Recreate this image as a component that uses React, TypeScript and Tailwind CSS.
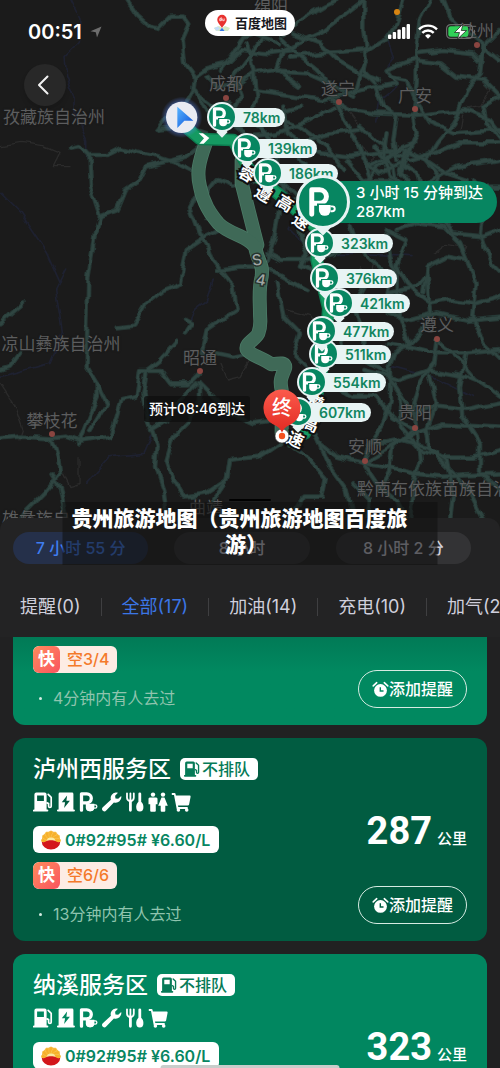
import type { ReactNode } from "react";

/* ---------- Map data ---------- */

// Road polylines, in map units (three units to a pixel).
const ROADS: string[] = [
  "380,0 410,45 450,80 475,85 510,50 550,50 568,75 548,120 555,190 585,230 580,270 560,310 530,330 500,350 470,390",
  "210,440 235,435 265,465 320,465 360,445 420,460 470,470 530,490 570,510",
  "265,465 270,560 300,650 285,700 265,830 262,960 260,1100 290,1150 290,1190 270,1240 250,1290 235,1330",
  "300,650 350,630 375,570 420,540 440,500 500,485 560,470 600,440",
  "470,390 560,380 620,400",
  "0,1315 60,1310 155,1315 200,1310 240,1325 330,1310 350,1250 365,1200 410,1190 420,1110 480,1110 510,1150 570,1150 600,1120",
  "155,1315 175,1380 180,1420 130,1480 80,1530 60,1560",
  "155,1420 180,1460 200,1560",
  "290,1150 320,1210 270,1290",
  "350,985 400,980 440,910 490,870 540,850 560,750 620,710 660,690",
  "555,960 575,970 555,1000",
  "530,1025 480,1080 440,1110 430,1180 445,1260 470,1330 465,1400 490,1470 500,1540",
  "600,1150 600,1200 560,1270 520,1310 500,1380 520,1440 550,1490 620,1480 680,1440 690,1380 780,1370 840,1330",
  "600,1150 650,1200 690,1240 760,1270 830,1260",
  "590,1150 540,1200 500,1260 450,1290",
  "600,560 570,620 600,700 625,740 640,780 700,860 710,930 620,990 605,1060",
  "650,1060 700,1070 750,1060",
  "585,230 620,205 680,190 720,150 800,160 880,150",
  "660,210 700,160 730,110 760,100 840,130",
  "620,230 650,260 720,250 760,220 830,210 900,260",
  "600,290 640,320 690,310 720,340 760,360 900,320",
  "580,260 620,340 650,380 700,380 740,410",
  "790,110 700,230 720,290 700,330",
  "740,130 760,210 770,300 740,370",
  "850,100 920,50 970,20 1010,0",
  "830,210 850,150 960,100 1090,0",
  "840,110 900,170 950,210 980,240",
  "830,215 920,220 1000,255 1060,290",
  "880,100 960,130 1010,180 1080,220 1140,240",
  "760,270 900,290 970,300 1080,270 1190,250",
  "870,170 960,160 1100,150 1160,115 1190,70 1210,0",
  "1090,0 1090,90 1100,170 1090,210 1130,250",
  "1060,280 1080,210 1100,180",
  "1190,250 1160,210 1240,180 1320,190 1370,230 1450,240 1500,290",
  "1250,250 1250,130 1260,60 1290,0",
  "1250,160 1330,150 1420,160 1440,180 1460,130 1500,90",
  "1330,0 1350,50 1400,100 1500,180",
  "1450,140 1440,220 1400,270 1360,370 1310,430 1280,480",
  "1000,300 1050,330 1120,340 1250,345 1400,330 1470,360 1500,400",
  "1010,310 1050,390 1080,440 1100,500 1120,560",
  "850,320 860,400 900,430 960,460 1050,470 1180,450",
  "740,410 830,400 930,360 1000,320",
  "820,350 900,380 980,440 1030,510",
  "760,360 840,450 830,520 860,590",
  "730,450 800,440 900,430 990,400 1080,390",
  "1130,260 1150,320 1190,350 1180,420 1190,480",
  "1250,250 1240,350 1250,400 1220,470 1200,520",
  "1170,230 1220,240 1250,310 1290,370 1360,400 1500,390",
  "1500,290 1450,320 1460,370 1500,420",
  "1080,380 1140,430 1180,460 1230,480 1300,460 1380,430 1500,430",
  "1100,500 1160,470 1210,450 1280,480 1340,520 1400,540",
  "1090,480 1140,520 1200,490 1250,520 1270,590 1250,650",
  "1160,400 1150,470 1170,530 1230,560 1290,540 1370,500 1500,480",
  "1120,440 1180,500 1190,560 1150,620",
  "1220,450 1200,510 1230,550 1210,620",
  "1040,480 1090,540 1170,540 1240,580 1320,590 1400,560 1500,560",
  "1090,560 1130,500 1190,450 1240,430",
  "1280,480 1320,530 1300,600 1340,660",
  "620,660 600,600 650,540 700,560 800,530 860,560 900,600",
  "900,480 970,530 1040,600",
  "860,530 840,620 820,720 800,780",
  "880,600 900,700 920,760 900,800 950,820",
  "800,760 840,780 920,780 1000,760 1060,720",
  "650,810 720,800 790,800 850,830 920,870",
  "830,850 850,950 900,1000 880,1060 920,1100",
  "1050,680 1070,740 1120,790 1170,830 1160,880 1250,860 1280,820",
  "1160,700 1170,770 1190,820 1190,880 1200,950 1230,1030",
  "1190,690 1250,670 1330,680 1380,730 1400,780 1340,770 1280,800 1270,880",
  "1160,690 1220,720 1190,800 1220,850 1250,880 1290,910",
  "1330,660 1360,700 1450,710 1500,690",
  "1280,820 1290,940 1260,1000 1230,1030 1180,1060 1160,1120",
  "1290,910 1350,900 1430,910 1500,890",
  "1400,780 1430,850 1420,950 1450,1030 1500,1080",
  "1160,940 1230,960 1310,940 1400,960 1500,950",
  "1160,1030 1230,1040 1310,1060 1400,1060 1500,1050",
  "1310,1020 1300,1090 1260,1150 1240,1220 1250,1290 1260,1380 1240,1450 1230,1560",
  "1310,1020 1380,1080 1430,1140 1500,1190",
  "1010,960 1030,1040 1090,1080 1160,1120 1200,1180 1240,1240",
  "1090,1110 1200,1140 1290,1110 1400,1130 1450,1150",
  "1000,1150 1060,1190 1130,1190 1180,1250 1240,1290",
  "1170,1110 1170,1200 1150,1270 1110,1330 1090,1380",
  "920,1200 940,1290 960,1330 1010,1370 1090,1390 1160,1350 1240,1300 1330,1270 1500,1280",
  "960,1330 990,1400 1040,1470 1060,1560",
  "860,1330 920,1370 980,1440 970,1490 910,1490 870,1560",
  "1090,1390 1130,1450 1190,1500 1220,1560",
  "1090,1390 1150,1400 1240,1420 1330,1430 1500,1420",
  "1110,1330 1160,1330 1210,1320 1280,1340 1340,1380 1360,1480 1350,1560",
  "1240,1240 1310,1220 1400,1230 1500,1210",
  "1200,1190 1200,1280 1260,1350 1330,1370 1420,1370 1500,1350",
  "1290,1130 1310,1210 1280,1290 1290,1350 1400,1460 1450,1560",
  "1240,1290 1180,1340 1170,1420 1140,1470",
  "1400,1060 1380,1160 1390,1250 1440,1330 1440,1420 1500,1470",
  "690,1380 680,1440 640,1500 640,1560",
  "1090,1080 1090,1000 1060,930 1100,860",
  "0,1110 30,1100 60,1060",
  "0,970 70,910",
  "1100,1560 1110,1500 1060,1450",
  "1420,540 1450,620 1440,700 1470,790 1500,820",
];

const RIVERS: string[] = [
  "210,0 240,60 235,130 195,170 200,230 225,290 225,340 260,420 260,480",
  "1160,100 1180,180 1160,210 1190,260 1140,300 1130,360",
  "640,840 620,900 580,930 560,1000",
  "200,810 170,870 190,1000 150,1090 0,1130",
  "920,600 870,690 940,760 1080,760 1230,770",
  "0,580 60,640 140,760 180,850",
  "260,1450 330,1370 430,1360 460,1290",
  "1110,1130 1190,1100 1300,1130 1420,1190",
];

const BORDERS: string[] = [
  "0,440 60,430 130,440 180,460 160,500 210,500",
  "0,1150 40,1210 70,1290 60,1320",
  "1050,340 1080,380 1060,420 1120,470 1110,530",
  "1440,240 1470,270 1440,320 1390,330 1380,390",
  "1090,760 1120,780 1110,830 1080,800 1060,850",
  "1300,760 1340,730 1400,740 1390,760",
  "660,1090 680,1140 720,1130 750,1080 810,1110",
  "190,1420 210,1460 240,1450 240,1370",
  "860,930 930,950 960,1010",
];

const PLACES = [
  { name: "绵阳", x: 271, y: 7 },
  { name: "成都", x: 226, y: 84, dot: [226, 98] },
  { name: "遂宁", x: 338, y: 89, dot: [339, 102] },
  { name: "广安", x: 415, y: 96, dot: [415, 109] },
  { name: "达州", x: 477, y: 31, dot: [477, 45] },
  { name: "孜藏族自治州", x: 54, y: 117 },
  { name: "凉山彝族自治州", x: 61, y: 344 },
  { name: "昭通", x: 200, y: 358, dot: [200, 371] },
  { name: "攀枝花", x: 52, y: 421, dot: [52, 434] },
  { name: "遵义", x: 437, y: 325, dot: [437, 339] },
  { name: "贵阳", x: 415, y: 413, dot: [415, 428] },
  { name: "安顺", x: 365, y: 447, dot: [365, 461] },
  { name: "黔南布依族苗族自治州", x: 442, y: 489 },
  { name: "曲靖", x: 206, y: 508 },
  { name: "雄彝族自", x: 36, y: 519 },
];

const STOPS = [
  { km: 607, x: 298, y: 412 },
  { km: 554, x: 312, y: 382 },
  { km: 511, x: 324, y: 354 },
  { km: 477, x: 322, y: 331 },
  { km: 421, x: 339, y: 303 },
  { km: 376, x: 325, y: 278 },
  { km: 323, x: 320, y: 243 },
  { km: 186, x: 268, y: 173 },
  { km: 139, x: 247, y: 148 },
  { km: 78, x: 222, y: 117 },
];

const ROAD_NAME = [
  { c: "蓉", x: 741, y: 522, r: 30 },
  { c: "遵", x: 790, y: 582, r: 30 },
  { c: "高", x: 855, y: 610, r: 32 },
  { c: "速", x: 903, y: 665, r: 32 },
  { c: "遵", x: 945, y: 1208, r: 24 },
  { c: "高", x: 932, y: 1272, r: 24 },
  { c: "速", x: 886, y: 1320, r: 24 },
];

/* ---------- Icons ---------- */

function ParkingCup({ className, cut }: { className: string; cut: string }) {
  return (
    <svg viewBox="0 0 20 20" className={className} fill="none" aria-hidden="true">
      <path d="M2.500 18.200V1.800h5.300a4.500 4.500 0 0 1 0 9H3" stroke="currentColor" strokeWidth="3.300" strokeLinecap="round" strokeLinejoin="round" />
      <path d="M6.800 11.800h8.500v3.400a4 4 0 0 1-4 4h-.5a4 4 0 0 1-4-4z" fill="currentColor" stroke={cut} strokeWidth="1.600" />
      <path d="M7.300 12h7.800v3.400a3.800 3.800 0 0 1-3.800 3.800h-.2a3.800 3.800 0 0 1-3.800-3.800z" fill="currentColor" />
      <path d="M15 12.900h1.200a1.600 1.600 0 0 1 0 3.300H15" stroke="currentColor" strokeWidth="1.300" />
    </svg>
  );
}

function GasPump({ className }: { className: string }) {
  return (
    <svg viewBox="0 0 20 20" className={className} aria-hidden="true">
      <path fill="currentColor" fillRule="evenodd" d="M3.400.500h8.200a2 2 0 0 1 2 2v15h.700a1 1 0 0 1 0 2.100H.9a1 1 0 0 1 0-2.100h.5v-15a2 2 0 0 1 2-2zm.700 3v5.600h6.800V3.500z" />
      <path fill="none" stroke="currentColor" strokeWidth="1.700" strokeLinecap="round" strokeLinejoin="round" d="M15.200 2.400l3 2.900v8.900a1.300 1.300 0 0 1-2.600 0v-2.600l-1.600-.7" />
    </svg>
  );
}

function Charger({ className }: { className: string }) {
  return (
    <svg viewBox="0 0 20 20" className={className} aria-hidden="true">
      <path fill="currentColor" fillRule="evenodd" d="M4 .5h12a1.400 1.400 0 0 1 1.400 1.400v15.600h.5a1 1 0 0 1 0 2.100H2a1 1 0 0 1 0-2.100h.6V1.900A1.400 1.400 0 0 1 4 .5zm7.100 3L5.800 10.300h3.300l-1 5.700 5.800-7.200h-3.500z" />
    </svg>
  );
}

function Wrench({ className }: { className: string }) {
  return (
    <svg viewBox="0 0 20 20" className={className} aria-hidden="true">
      <path fill="currentColor" d="M13.700.6a5.800 5.800 0 0 1 2.300.2l-2.900 3 .4 2.600 2.700.4 3-2.900a5.600 5.600 0 0 1-7.300 6.500l-7.700 8.200a2.300 2.300 0 0 1-3.400-3.300l8.100-7.500A5.600 5.600 0 0 1 13.700.6z" />
    </svg>
  );
}

function Cutlery({ className }: { className: string }) {
  return (
    <svg viewBox="0 0 20 20" className={className} aria-hidden="true">
      <path fill="none" stroke="currentColor" strokeWidth="1.800" strokeLinecap="round" d="M2 1.300v4.400a3.400 3.400 0 0 0 6.800 0V1.300M5.400 1.300v7" />
      <path fill="none" stroke="currentColor" strokeWidth="2.800" strokeLinecap="round" d="M5.400 9v9.300M14.800 1.800v12" />
      <path fill="currentColor" d="M14.800 9.500c2 0 3.600 2.900 3.600 5.400a3.600 4.500 0 0 1-7.200 0c0-2.500 1.600-5.400 3.600-5.400z" />
    </svg>
  );
}

function Restroom({ className }: { className: string }) {
  return (
    <svg viewBox="0 0 20 20" className={className} fill="currentColor" aria-hidden="true">
      <circle cx="5" cy="2.600" r="2.200" />
      <path d="M1.800 5.400h6.400a1.400 1.400 0 0 1 1.300 1.400v5.400H7.800v6.600a1 1 0 0 1-1 1H3.200a1 1 0 0 1-1-1v-6.600H.5V6.800a1.400 1.400 0 0 1 1.300-1.400z" />
      <circle cx="15" cy="2.600" r="2.200" />
      <path d="M13.500 5.400h3l3.300 8.400h-2.500v5a1 1 0 0 1-1 1h-2.600a1 1 0 0 1-1-1v-5h-2.500z" />
    </svg>
  );
}

function Cart({ className }: { className: string }) {
  return (
    <svg viewBox="0 0 20 20" className={className} fill="currentColor" aria-hidden="true">
      <path d="M.8.9h2.700a1 1 0 0 1 1 .8l.4 1.900h13.700a1 1 0 0 1 1 1.200l-1.500 7.700a1.400 1.400 0 0 1-1.300 1.100H7l.3 1.500h9.400v1.800H5.700L3 2.900H.8z" />
      <circle cx="7.400" cy="18" r="1.800" />
      <circle cx="15.700" cy="18" r="1.800" />
    </svg>
  );
}

function AlarmClock({ hand }: { hand: string }) {
  return (
    <svg viewBox="0 0 18 18" className="size-[17px]" aria-hidden="true">
      <circle cx="9" cy="10" r="6.800" fill="#fff" />
      <path d="M1.300 5.200 5 1.800M16.700 5.200 13 1.800" stroke="#fff" strokeWidth="1.700" strokeLinecap="round" />
      <path d="M8.800 6.600v4h3.400" stroke={hand} strokeWidth="1.500" fill="none" />
    </svg>
  );
}

function FlowerLogo() {
  const petals = [-90, -60, -30, 0, 30, 60, 90];
  return (
    <svg viewBox="0 0 20 20" className="size-5" aria-hidden="true">
      <path d="M.8 10.500a9.200 9.200 0 0 1 18.400 0z" fill="#f39a16" />
      {petals.map((a) => (
        <ellipse key={a} cx="10" cy="4.700" rx="2.200" ry="4" fill="#f7b02a" stroke="#fbd46e" strokeWidth=".4" transform={`rotate(${a} 10 10.500)`} />
      ))}
      <path d="M5.500 11a4.600 4.400 0 0 1 9 0z" fill="#fbe9a0" />
      <path d="M.8 12c1.800.4 3.200 0 4.400-.8 2-1.400 7.600-1.400 9.600 0 1.200.8 2.600 1.200 4.400.8a9.200 7.600 0 0 1-18.400 0z" fill="#d3161b" />
    </svg>
  );
}

const FACILITY_ICONS: Record<string, ReactNode> = {
  加油: <GasPump className="size-5" />,
  充电: <Charger className="size-5" />,
  停车: <ParkingCup className="size-5" cut="none" />,
  维修: <Wrench className="size-5" />,
  餐饮: <Cutlery className="size-5" />,
  卫生间: <Restroom className="size-5" />,
  购物: <Cart className="size-5" />,
};

/* ---------- Map ---------- */

const SLOW_ROUTE =
  "M617 430C595 490 590 520 600 560C610 610 630 640 655 670C690 705 740 705 765 740C775 790 790 790 785 830C775 870 780 900 780 940C780 960 785 975 775 1000C765 1020 735 1030 740 1048C750 1065 780 1070 815 1093C835 1090 860 1085 855 1105C845 1130 838 1140 845 1170V1300";
const FAST_ROUTE = "M545 370L600 417L700 420L745 505L850 595L955 690L950 780L985 925L975 1060L950 1190L915 1300L870 1320";

function MapDrawing() {
  return (
    <svg viewBox="0 0 1500 1620" className="absolute inset-0 size-full" fill="none" aria-hidden="true">
      <defs>
        <filter id="wiggle" x="0" y="0" width="100%" height="100%" colorInterpolationFilters="sRGB">
          <feTurbulence type="fractalNoise" baseFrequency="0.02" numOctaves="2" seed="4" />
          <feDisplacementMap in="SourceGraphic" scale="24" xChannelSelector="R" yChannelSelector="G" />
        </filter>
        <linearGradient id="arrow" x1="0" y1="0" x2="1" y2="1">
          <stop offset="0" stopColor="#57b5ff" />
          <stop offset="1" stopColor="#0a4fd8" />
        </linearGradient>
        <radialGradient id="glow">
          <stop offset="0.7" stopColor="#5a8cff" stopOpacity=".45" />
          <stop offset="1" stopColor="#5a8cff" stopOpacity="0" />
        </radialGradient>
        <linearGradient id="pin" x1="0" y1="0" x2="0" y2="1">
          <stop offset="0" stopColor="#fb5a4c" />
          <stop offset="1" stopColor="#e22a22" />
        </linearGradient>
      </defs>
      <g filter="url(#wiggle)" strokeLinejoin="round" strokeLinecap="round">
        {BORDERS.map((p) => (
          <polyline key={p} points={p} stroke="#2b2b2b" strokeWidth="4" />
        ))}
        {RIVERS.map((p) => (
          <polyline key={p} points={p} stroke="#1e2130" strokeWidth="5" />
        ))}
        {ROADS.map((p) => (
          <polyline key={p} points={p} stroke="#263835" strokeWidth="14" />
        ))}
        {ROADS.map((p) => (
          <polyline key={p} points={p} stroke="#2f4541" strokeWidth="8" />
        ))}
      </g>
      <g strokeLinejoin="round" strokeLinecap="round">
        <g stroke="#4b7a66" strokeWidth="42">
          <path d="M725 480V550L772 735" />
          <path d={SLOW_ROUTE} />
        </g>
        <g stroke="#3f6957" strokeWidth="37">
          <path d="M725 480V550L772 735" />
          <path d={SLOW_ROUTE} />
        </g>
        <path d={FAST_ROUTE} stroke="#0d7c50" strokeWidth="38" />
        <path d={FAST_ROUTE} stroke="#159a62" strokeWidth="29" />
      </g>
      <path d="M596 400L609 400L628 414L611 431L598 431L612 415Z" fill="#fff" />
      <circle cx="545" cy="352" r="62" fill="url(#glow)" />
      <circle cx="545" cy="352" r="47" fill="#e9ebf2" />
      <path d="M532 320L580 362L553 362L532 384Z" fill="url(#arrow)" />
      <g fill="#fff" stroke="#111" strokeWidth="12" paintOrder="stroke" fontSize="50" fontWeight="600" textAnchor="middle">
        {ROAD_NAME.map((n) => (
          <text key={`${n.c}${n.x}`} x={n.x} y={n.y} dy="18" transform={`rotate(${n.r} ${n.x} ${n.y})`}>
            {n.c}
          </text>
        ))}
      </g>
      <g fill="#a0a6a3" stroke="#26332e" strokeWidth="8" paintOrder="stroke" fontSize="46" fontWeight="500" textAnchor="middle">
        <text x="771" y="796" transform="rotate(-10 771 780)">S</text>
        <text x="783" y="856" transform="rotate(10 783 840)">4</text>
      </g>
    </svg>
  );
}

function StopPin({ km, x, y }: { km: number; x: number; y: number }) {
  return (
    <div className="absolute flex items-center" style={{ left: x - 15, top: y - 15 }}>
      <span className="absolute top-[26px] left-[11px] size-2 rotate-45 bg-[#e8f4f4]" />
      <span className="absolute -right-[5px] left-4 h-[19px] rounded-full bg-[#e8f4f4]" />
      <span className="relative flex size-[30px] items-center justify-center rounded-full border-2 border-[#e8f4f4] bg-[#078661] text-white">
        <ParkingCup className="size-5" cut="#078661" />
      </span>
      <span className="relative pl-[6px] text-sm leading-[19px] font-semibold text-[#12855f]">{km}km</span>
    </div>
  );
}

function RouteMap() {
  return (
    <section aria-label="路线地图" className="relative h-[540px] shrink-0 overflow-hidden bg-[#1b1b1b]">
      <div className="absolute inset-y-0 left-1/2 w-[500px] -translate-x-1/2">
        <MapDrawing />
        {PLACES.map((p) => (
          <span key={p.name}>
            <span
              className="absolute -translate-x-1/2 -translate-y-1/2 text-[17px] leading-5 whitespace-nowrap text-[#5c5d5e] [text-shadow:0_0_2px_#1b1b1b]"
              style={{ left: p.x, top: p.y }}
            >
              {p.name}
            </span>
            {p.dot && (
              <span
                className="absolute size-[6px] -translate-x-1/2 -translate-y-1/2 rounded-full bg-[#8a4540]"
                style={{ left: p.dot[0], top: p.dot[1] }}
              />
            )}
          </span>
        ))}
        {STOPS.map((s) => (
          <StopPin key={s.km} {...s} />
        ))}

        <div className="absolute top-[181px] left-[323px] flex h-[42px] flex-col justify-center rounded-r-full bg-[#078661] pr-[14px] pl-[33px] text-[15px] leading-[19px] font-medium text-white">
          <span>3 小时 15 分钟到达</span>
          <span>287km</span>
        </div>
        <span className="absolute top-[221px] left-[317px] size-3 rotate-45 bg-[#e8f4f4]" />
        <span className="absolute top-[175px] left-[296px] flex size-[54px] items-center justify-center rounded-full border-[3px] border-[#e8f4f4] bg-[#078661] text-white">
          <ParkingCup className="size-[30px]" cut="#078661" />
        </span>

        <span className="absolute top-[396px] left-[144px] rounded-[3px] bg-[#0f0f0f]/80 px-[5px] text-sm leading-[26px] font-medium whitespace-nowrap text-white">
          预计08:46到达
        </span>
        <svg viewBox="0 0 40 56" className="absolute top-[388px] left-[262px] h-14 w-10" aria-hidden="true">
          <circle cx="20" cy="48" r="7" fill="#fff" stroke="#333" strokeWidth=".6" />
          <circle cx="20" cy="48" r="3.200" fill="#f4511e" />
          <path d="M20 1.500a18.600 18.600 0 0 1 6.500 36C23.500 39 21.500 41 20 44.500 18.500 41 16.500 39 13.500 37.500A18.600 18.600 0 0 1 20 1.500z" fill="url(#pin)" />
        </svg>
        <span className="absolute top-[396px] left-[272px] text-xl leading-6 font-medium text-white">终</span>
        <span className="absolute top-[499px] left-[229px] h-[2px] w-[42px] rounded-full bg-black" />
      </div>
    </section>
  );
}

/* ---------- Status bar and header ---------- */

function StatusBar() {
  return (
    <header className="absolute inset-x-0 top-0 flex items-start justify-between pr-6 pl-7 text-white">
      <div className="mt-5 flex items-center gap-2">
        <time className="text-xl leading-6 font-semibold">00:51</time>
        <svg viewBox="0 0 12 12" className="size-3" aria-hidden="true">
          <path d="M11.500.500 7 11.500 5.800 6.300.500 5.200z" fill="#6d6d6d" />
        </svg>
      </div>
      <div className="mt-6 flex items-start gap-2">
        <svg viewBox="0 0 22 15" className="h-[15px] w-[22px]" fill="#fff" aria-hidden="true">
          <rect x="0" y="10.500" width="3.400" height="4.500" rx="1" />
          <rect x="4.700" y="8" width="3.400" height="7" rx="1" />
          <rect x="9.400" y="5.500" width="3.400" height="9.500" rx="1" />
          <rect x="14" y="3" width="3.400" height="12" rx="1" />
          <rect x="18.600" y="0" width="3.400" height="15" rx="1" />
        </svg>
        <svg viewBox="0 0 20 15" className="h-[15px] w-5" fill="none" stroke="#fff" strokeWidth="2.400" aria-hidden="true">
          <path d="M1 5.300a12.800 12.800 0 0 1 18 0" />
          <path d="M4.300 8.900a8 8 0 0 1 11.400 0" />
          <path d="M10 14.800 7.100 11.700a4.200 4.200 0 0 1 5.800 0z" fill="#fff" stroke="none" />
        </svg>
        <svg viewBox="0 0 30 15" className="h-[15px] w-[30px]" aria-hidden="true">
          <rect x=".6" y=".6" width="26" height="13.800" rx="4" fill="none" stroke="#6b6b6b" strokeWidth="1.200" />
          <rect x="2.300" y="2.300" width="20" height="10.400" rx="2.500" fill="#30d158" />
          <path d="M28 5.500v4a2.200 2.200 0 0 0 0-4z" fill="#6b6b6b" />
          <path d="M17 0 8.500 8.500h5L11.500 15l9-8.500h-5.200z" fill="#fff" stroke="#1b1b1b" strokeWidth=".7" />
        </svg>
      </div>
      <span className="absolute top-[9px] right-[100px] size-[6px] rounded-full bg-[#d98512]" />
      <div className="absolute top-[10px] left-1/2 flex h-[26px] w-[90px] -translate-x-1/2 items-center justify-center gap-1 rounded-full bg-white">
        <svg viewBox="0 0 18 18" className="size-[18px]" aria-hidden="true">
          <path d="M1 14l5-2 3 2-2 3H3zM17 14l-5-2-3 2 2 3h4z" fill="#d6e9c4" />
          <path d="M1 14l4-1.500 2 2L4 17z" fill="#c3defa" />
          <path d="M6.500 17 9 13.800 11.500 17z" fill="#3679e8" />
          <path d="M9 .8a4.700 4.700 0 0 1 4.700 4.700C13.700 9 11 10.500 9 14 7 10.500 4.300 9 4.300 5.500A4.700 4.700 0 0 1 9 .8z" fill="#e8322f" />
          <path d="M6.700 4.700h1.500v2H6.700zM8.200 3.200v3.500M9.700 4.500v2.200h1.500V4.500" stroke="#fff" strokeWidth=".7" fill="none" />
        </svg>
        <span className="text-[13px] leading-5 font-bold text-[#17181d]">百度地图</span>
      </div>
      <button type="button" aria-label="返回" className="absolute top-16 left-6 flex size-[42px] items-center justify-center rounded-full bg-[#282828] shadow-md">
        <svg viewBox="0 0 12 20" className="mr-1 h-5 w-3" fill="none" aria-hidden="true">
          <path d="M10.500 1.500 2 10l8.500 8.500" stroke="#f2f2f2" strokeWidth="2" strokeLinecap="round" strokeLinejoin="round" />
        </svg>
      </button>
    </header>
  );
}

/* ---------- Sheet ---------- */

const DURATIONS = ["7 小时 55 分", "8 小时", "8 小时 2 分"];
const TABS = ["提醒(0)", "全部(17)", "加油(14)", "充电(10)", "加气(2)"];

function FastCharge({ free }: { free: string }) {
  return (
    <div className="flex h-[27px] w-[84px] items-center overflow-hidden rounded-md bg-[#fdece4] text-base leading-[27px] font-medium text-[#f47a2b]">
      <span className="w-[27px] rounded-md bg-linear-to-br from-[#ff8a5c] to-[#f9525f] text-center text-[17px] font-bold text-white">快</span>
      <span className="pl-[7px] whitespace-nowrap">空{free}</span>
    </div>
  );
}

function Visited({ text }: { text: string }) {
  return (
    <p className="flex h-5 items-center gap-[11px] pl-[6px] text-base leading-5 text-[#8fc4ae]">
      <span className="size-[3px] rounded-full bg-[#d5ebe2]" />
      {text}
    </p>
  );
}

function ReminderButton({ hand }: { hand: string }) {
  return (
    <button type="button" className="flex h-[38px] w-[109px] items-center justify-center rounded-full border-[1.5px] border-[#d6ebe2] text-base font-medium whitespace-nowrap text-white">
      <AlarmClock hand={hand} />
      添加提醒
    </button>
  );
}

type Area = {
  name: string;
  km: number;
  facilities: string[];
  tone: string;
  hand: string;
  free?: string;
  visited?: string;
};

function AreaCard({ name, km, facilities, tone, hand, free, visited }: Area) {
  return (
    <article className={`flex min-h-[203px] shrink-0 justify-between rounded-xl px-5 pt-[17px] pb-[17px] ${tone}`}>
      <div>
        <div className="flex h-7 items-center gap-[9px]">
          <h2 className="text-[23px] leading-7 font-medium text-white">{name}</h2>
          <span className="flex h-[22px] items-center gap-[2px] rounded-[5px] bg-white pr-2 pl-1 text-base leading-[22px] font-medium text-[#067a57]">
            <GasPump className="size-4" />
            不排队
          </span>
        </div>
        <ul className="mt-[9px] flex gap-[3px] text-white">
          {facilities.map((f) => (
            <li key={f} aria-label={f}>
              {FACILITY_ICONS[f]}
            </li>
          ))}
        </ul>
        <p className="mt-[14px] flex h-[27px] w-fit items-center gap-1 rounded-md bg-white pr-[9px] pl-2 text-base font-semibold whitespace-nowrap text-[#078661]">
          <FlowerLogo />
          0#92#95# ¥6.60/L
        </p>
        {free && (
          <div className="mt-[9px]">
            <FastCharge free={free} />
          </div>
        )}
        {visited && (
          <div className="mt-[15px]">
            <Visited text={visited} />
          </div>
        )}
      </div>
      <div className="flex flex-col items-end justify-between pt-14">
        <p className="flex h-10 items-baseline gap-[5px] leading-10 text-white">
          <strong className="font-[Roboto] text-[38px] font-bold">{km}</strong>
          <span className="text-[15px] font-medium">公里</span>
        </p>
        {visited && <ReminderButton hand={hand} />}
      </div>
    </article>
  );
}

export default function App() {
  return (
    <main className="relative flex h-screen flex-col overflow-hidden bg-[#212122] font-['Inter','Noto_Sans_CJK_SC',sans-serif]">
      <RouteMap />
      <StatusBar />

      <section className="relative -mt-[22px] flex min-h-0 flex-1 flex-col rounded-t-xl bg-[#232324]">
        <div className="mt-[14px] grid grid-cols-3 gap-[26px] pr-[29px] pl-[13px]">
          {DURATIONS.map((d, i) => (
            <button
              key={d}
              type="button"
              className={
                i === 0
                  ? "h-8 rounded-full bg-[#25304a] text-base font-medium text-[#3f7df0]"
                  : "h-8 rounded-full bg-[#333335] text-base font-medium text-[#d0d0dc]"
              }
            >
              {d}
            </button>
          ))}
        </div>

        <nav className="mt-[13px] flex h-[60px] shrink-0 items-center overflow-hidden pl-5">
          {TABS.map((t, i) => (
            <div key={t} className="flex shrink-0 items-center">
              {i > 0 && <span className="mx-5 h-[18px] w-px bg-[#3f3f41]" />}
              <button type="button" className={i === 1 ? "text-lg leading-6 text-[#3b76e6]" : "text-lg leading-6 text-[#cfcfdc]"}>
                {t}
              </button>
            </div>
          ))}
        </nav>

        <div className="flex min-h-0 flex-1 flex-col gap-[13px] overflow-hidden bg-[#212122] px-[13px]">
          <article className="flex shrink-0 items-end justify-between rounded-b-xl bg-linear-to-b from-[#017a56] to-[#018960] to-40% px-5 pt-[9px] pb-[17px]">
            <div className="flex flex-col gap-[15px]">
              <FastCharge free="3/4" />
              <Visited text="4分钟内有人去过" />
            </div>
            <ReminderButton hand="#018960" />
          </article>
          <AreaCard
            name="泸州西服务区"
            km={287}
            facilities={["加油", "充电", "停车", "维修", "餐饮", "卫生间", "购物"]}
            tone="bg-[#015c41]"
            hand="#015c41"
            free="6/6"
            visited="13分钟内有人去过"
          />
          <AreaCard
            name="纳溪服务区"
            km={323}
            facilities={["加油", "充电", "停车", "维修", "餐饮", "购物"]}
            tone="bg-[#018760]"
            hand="#018760"
          />
        </div>
      </section>

      <div className="absolute top-[502px] left-1/2 w-3/4 -translate-x-1/2 bg-[#111]/60 px-[9px] pt-1 pb-[7px] text-[21px] leading-[26px] font-black text-white">
        <span className="block whitespace-nowrap">贵州旅游地图（贵州旅游地图百度旅</span>
        <span className="block pr-2 text-center">游）</span>
      </div>
      <span className="absolute bottom-0 left-1/2 h-[3px] w-[179px] -translate-x-1/2 rounded-t-full bg-[#c9cdcb]" />
    </main>
  );
}
